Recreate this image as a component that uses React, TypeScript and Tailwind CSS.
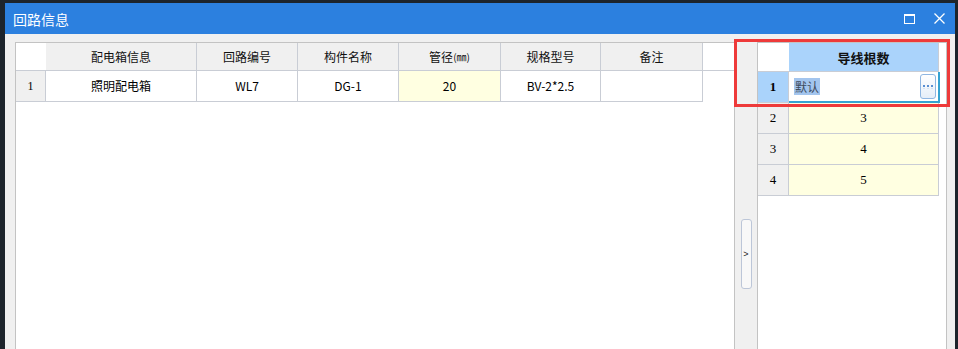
import React from "react";

const LINE = "border-[#c9cdd5]";

function HeaderCell({ w, children }: { w: string; children?: React.ReactNode }) {
  return (
    <div className={`${w} h-full flex items-center justify-center border-r ${LINE} bg-[#f0f0f0] text-[12px] text-[#111] leading-none`}>
      {children}
    </div>
  );
}

function DataCell({ w, children, bg = "bg-white" }: { w: string; children?: React.ReactNode; bg?: string }) {
  return (
    <div className={`${w} h-full flex items-center justify-center border-r ${LINE} ${bg} text-[12px] text-black leading-none`}>
      {children}
    </div>
  );
}

export default function App() {
  const rows = [
    { n: "2", v: "3" },
    { n: "3", v: "4" },
    { n: "4", v: "5" },
  ];
  return (
    <div className="relative w-[958px] h-[349px] overflow-hidden bg-[#1d242c] pt-[3px] pl-[5px] font-['Noto_Sans_CJK_SC','Noto_Sans',sans-serif]">
      <div className="w-[950px] h-[346px] bg-[#f0f0f0] flex flex-col">
        {/* Title bar */}
        <div className="h-[31px] bg-[#2c80df] flex items-center pl-[8px] pr-[10px] shrink-0">
          <span className="text-white text-[14px] leading-none">回路信息</span>
          <div className="ml-auto flex items-center gap-[19px]">
            <div className="w-[11px] h-[10px] border border-white border-t-2" />
            <svg width="11" height="11" viewBox="0 0 11 11">
              <path d="M0.5 0.5 L10.5 10.5 M10.5 0.5 L0.5 10.5" stroke="white" strokeWidth="1.3" />
            </svg>
          </div>
        </div>

        {/* Body */}
        <div className="flex pt-[8px] pl-[10px] flex-1">
          {/* Left panel */}
          <div className="w-[720px] h-[320px] bg-white border border-b-0 border-[#c3c3c3] flex flex-col">
            <div className={`flex h-[28px] border-b ${LINE}`}>
              <div className="w-[30px] h-full bg-white" />
              <HeaderCell w="w-[151px]">配电箱信息</HeaderCell>
              <HeaderCell w="w-[101px]">回路编号</HeaderCell>
              <HeaderCell w="w-[101px]">构件名称</HeaderCell>
              <HeaderCell w="w-[102px]">
                管径<span className="text-[10px]">(㎜)</span>
              </HeaderCell>
              <HeaderCell w="w-[100px]">规格型号</HeaderCell>
              <HeaderCell w="w-[102px]">备注</HeaderCell>
            </div>
            <div className="flex h-[31px]">
              <div className={`w-[30px] h-full flex items-center justify-center border-r border-b ${LINE} bg-[#f0f0f0] text-[12px] font-['Liberation_Serif',serif] text-black`}>
                1
              </div>
              <div className={`flex h-full border-b ${LINE}`}>
                <DataCell w="w-[151px]">照明配电箱</DataCell>
                <DataCell w="w-[101px]">WL7</DataCell>
                <DataCell w="w-[101px]">DG-1</DataCell>
                <DataCell w="w-[102px]" bg="bg-[#ffffe1]">20</DataCell>
                <DataCell w="w-[100px]">BV-2*2.5</DataCell>
                <DataCell w="w-[102px]" />
              </div>
            </div>
          </div>

          {/* Splitter */}
          <div className="w-[22px] flex flex-col items-center pt-[177px]">
            <div className="w-[11px] h-[70px] rounded-[3px] border border-[#bcc6d8] bg-[#f8f8f8] flex items-center justify-center">
              <span className="text-[9px] leading-none text-[#222] font-['Liberation_Sans',sans-serif]">&gt;</span>
            </div>
          </div>

          {/* Right panel */}
          <div className="w-[190px] h-[320px] bg-white border border-b-0 border-[#c3c3c3] flex flex-col">
            <div className="flex h-[29px]">
              <div className={`w-[31px] h-full bg-white border-b ${LINE}`} />
              <div className={`w-[150px] h-full bg-[#aad3fb] border-r border-b ${LINE} flex items-center justify-center text-[13px] font-bold text-[#111] leading-none`}>
                导线根数
              </div>
            </div>
            <div className="flex h-[31px]">
              <div className={`w-[31px] h-full bg-[#aad3fb] border-r border-b ${LINE} flex items-center justify-center text-[13px] font-bold font-['Liberation_Serif',serif] text-black`}>
                1
              </div>
              <div className="w-[151px] h-full bg-white border-r-2 border-b-2 border-[#36a3d2] flex items-center pl-[5px] pr-[2px]">
                <span className="bg-[#a3c5ee] text-[#3d4b5c] text-[12px] leading-[17px] px-[1px]">默认</span>
                <div className="ml-auto w-[16px] h-[25px] rounded-[3px] border border-[#8fb6e2] bg-gradient-to-b from-white to-[#e6eef8] flex flex-col items-center justify-center gap-[1px]">
                  <div className="flex gap-[2px]">
                    <div className="w-[2px] h-[2px] bg-[#5a8fd2]" />
                    <div className="w-[2px] h-[2px] bg-[#5a8fd2]" />
                    <div className="w-[2px] h-[2px] bg-[#5a8fd2]" />
                  </div>
                  <div className="flex gap-[2px]">
                    <div className="w-[2px] h-[1px] bg-[#d3e2f3]" />
                    <div className="w-[2px] h-[1px] bg-[#d3e2f3]" />
                    <div className="w-[2px] h-[1px] bg-[#d3e2f3]" />
                  </div>
                </div>
              </div>
            </div>
            {rows.map((r) => (
              <div key={r.n} className="flex h-[31px]">
                <div className={`w-[31px] h-full bg-[#f0f0f0] border-r border-b ${LINE} flex items-center justify-center text-[13px] font-['Liberation_Serif',serif] text-black`}>
                  {r.n}
                </div>
                <div className={`w-[150px] h-full bg-[#ffffe1] border-r border-b ${LINE} flex items-center justify-center text-[13px] font-['Liberation_Serif',serif] text-black`}>
                  {r.v}
                </div>
              </div>
            ))}
          </div>
        </div>
      </div>

      {/* Annotation rectangle */}
      <div className="absolute left-[734px] top-[39px] w-[216px] h-[68px] border-[3px] border-[#ee3a3a]" />
    </div>
  );
}
